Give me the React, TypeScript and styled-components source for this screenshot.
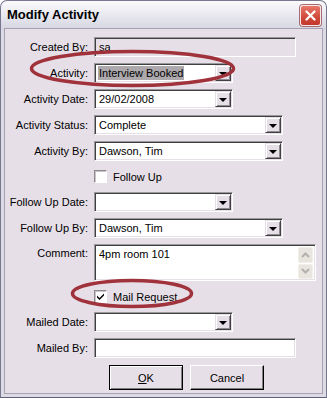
import React from "react";
import styled, { createGlobalStyle } from "styled-components";

const GlobalStyle = createGlobalStyle`
  html, body {
    margin: 0;
    padding: 0;
    background: #ffffff;
  }
  body {
    font-family: "Liberation Sans", Arial, sans-serif;
    font-size: 11px;
    color: #000000;
  }
`;

const FACE = "#e7dfe7";

const Frame = styled.div`
  width: 327px;
  height: 398px;
  box-sizing: border-box;
  border: 1px solid #77778f;
  border-bottom-color: #5f5f78;
  border-radius: 7px 7px 0 0;
  background: linear-gradient(#fbfbfd, #d6d6e2 28px, #dcdae4 30px);
  padding: 0 3px 3px;
  display: flex;
  flex-direction: column;
  overflow: hidden;
`;

const TitleBar = styled.div`
  height: 27px;
  display: flex;
  align-items: center;
  justify-content: space-between;
  padding: 0 2px 0 3px;
  flex-shrink: 0;
`;

const Title = styled.div`
  font-family: "Liberation Sans", Arial, sans-serif;
  font-weight: bold;
  font-size: 13px;
  color: #000000;
  padding-bottom: 1px;
`;

const CloseButton = styled.div`
  width: 19px;
  height: 19px;
  border: 1px solid #f4e8e8;
  border-radius: 3px;
  background: linear-gradient(#e8786a, #d04a3a 60%, #c2382c);
  display: flex;
  align-items: center;
  justify-content: center;
  margin-top: 1px;
  box-shadow: 0 0 0 1px #a76a70;
`;

const Client = styled.div`
  position: relative;
  flex: 1;
  background: ${FACE};
  border: 1px solid #a7a2b2;
  padding: 8px 0 0 0;
`;

const Form = styled.div`
  display: grid;
  grid-template-columns: 83px auto;
  column-gap: 6px;
  row-gap: 6px;
  align-items: center;
`;

const Label = styled.label<{ $top?: boolean }>`
  text-align: right;
  white-space: nowrap;
  line-height: 13px;
  align-self: ${(p) => (p.$top ? "start" : "center")};
  padding-top: ${(p) => (p.$top ? 3 : 0)}px;
`;

const Field = styled.div<{ $w: number; $h?: number; $disabled?: boolean }>`
  width: ${(p) => p.$w}px;
  height: ${(p) => p.$h ?? 20}px;
  box-sizing: border-box;
  border-style: solid;
  border-width: 1px;
  border-color: #9a979d #ffffff #ffffff #9a979d;
  box-shadow: inset 1px 1px 0 #404040, inset -1px -1px 0 ${FACE};
  background: ${(p) => (p.$disabled ? FACE : "#ffffff")};
  display: flex;
  padding: 1px;
`;

const Value = styled.div<{ $selected?: boolean }>`
  flex: 1;
  display: flex;
  align-items: center;
  padding-left: 2px;
  white-space: nowrap;
  span {
    padding: 1px;
    background: ${(p) => (p.$selected ? "#aca8ac" : "transparent")};
  }
`;

const DropButton = styled.div`
  width: 16px;
  height: 16px;
  box-sizing: border-box;
  background: ${FACE};
  border-style: solid;
  border-width: 1px;
  border-color: ${FACE} #404040 #404040 ${FACE};
  box-shadow: inset 1px 1px 0 #ffffff, inset -1px -1px 0 #8e8a90;
  display: flex;
  align-items: center;
  justify-content: center;
`;

const Arrow = styled.div`
  width: 0;
  height: 0;
  border-left: 4px solid transparent;
  border-right: 4px solid transparent;
  border-top: 4px solid #000000;
  margin-top: 1px;
`;

const CommentText = styled.div`
  flex: 1;
  padding: 2px 3px;
`;

const ScrollColumn = styled.div`
  width: 16px;
  display: flex;
  flex-direction: column;
  gap: 1px;
  padding: 1px 0 0 0;
`;

const ScrollButton = styled.div`
  width: 15px;
  height: 16px;
  box-sizing: border-box;
  border: 1px solid #f2eee8;
  background: #e8e4de;
  border-radius: 2px;
  display: flex;
  align-items: center;
  justify-content: center;
`;

const CheckRow = styled.div`
  height: 19px;
  display: flex;
  align-items: center;
  gap: 6px;
`;

const CheckBox = styled.div`
  width: 13px;
  height: 13px;
  box-sizing: border-box;
  border-style: solid;
  border-width: 1px;
  border-color: #8e8a8e #ffffff #ffffff #8e8a8e;
  background: #ffffff;
  box-shadow: inset 1px 1px 0 #c8c4c8;
  display: flex;
  align-items: center;
  justify-content: center;
`;

const ButtonRow = styled.div`
  display: flex;
  gap: 7px;
  padding-left: 15px;
  margin-top: 1px;
`;

const Button = styled.div<{ $default?: boolean }>`
  width: 74px;
  height: 25px;
  box-sizing: border-box;
  background: ${FACE};
  border: 1px solid ${(p) => (p.$default ? "#000000" : "#ffffff")};
  border-right-color: #000000;
  border-bottom-color: #000000;
  box-shadow: ${(p) =>
    p.$default
      ? "inset 1px 1px 0 #ffffff, inset -1px -1px 0 #808080"
      : "inset -1px -1px 0 #808080"};
  display: flex;
  align-items: center;
  justify-content: center;
  u {
    text-decoration: underline;
  }
`;

const Ring = styled.svg<{ $x: number; $y: number }>`
  position: absolute;
  left: ${(p) => p.$x}px;
  top: ${(p) => p.$y}px;
  pointer-events: none;
  overflow: visible;
`;

function Combo({ w, value, selected }: { w: number; value?: string; selected?: boolean }) {
  return (
    <Field $w={w}>
      <Value $selected={selected}>
        <span>{value}</span>
      </Value>
      <DropButton>
        <Arrow />
      </DropButton>
    </Field>
  );
}

function Chevron({ up }: { up?: boolean }) {
  return (
    <svg width="9" height="6" viewBox="0 0 9 6">
      <path
        d={up ? "M1 5 L4.5 1.5 L8 5" : "M1 1 L4.5 4.5 L8 1"}
        stroke="#b4b0ac"
        strokeWidth="2"
        fill="none"
      />
    </svg>
  );
}

function Check({ checked }: { checked?: boolean }) {
  return (
    <CheckBox>
      {checked && (
        <svg width="9" height="9" viewBox="0 0 9 9">
          <path d="M1 3.5 L3.5 6 L8 1.5 L8 3.5 L3.5 8 L1 5.5 Z" fill="#000000" />
        </svg>
      )}
    </CheckBox>
  );
}

export default function App() {
  return (
    <>
      <GlobalStyle />
      <Frame>
        <TitleBar>
          <Title>Modify Activity</Title>
          <CloseButton>
            <svg width="11" height="11" viewBox="0 0 11 11">
              <path d="M1.5 1.5 L9.5 9.5 M9.5 1.5 L1.5 9.5" stroke="#ffffff" strokeWidth="2.2" strokeLinecap="round" />
            </svg>
          </CloseButton>
        </TitleBar>
        <Client>
          <Form>
            <Label>Created By:</Label>
            <Field $w={202} $disabled>
              <Value>
                <span>sa</span>
              </Value>
            </Field>

            <Label>Activity:</Label>
            <Combo w={139} value="Interview Booked" selected />

            <Label>Activity Date:</Label>
            <Combo w={139} value="29/02/2008" />

            <Label>Activity Status:</Label>
            <Combo w={189} value="Complete" />

            <Label>Activity By:</Label>
            <Combo w={189} value="Dawson, Tim" />

            <span />
            <CheckRow>
              <Check />
              <span>Follow Up</span>
            </CheckRow>

            <Label>Follow Up Date:</Label>
            <Combo w={139} />

            <Label>Follow Up By:</Label>
            <Combo w={189} value="Dawson, Tim" />

            <Label $top>Comment:</Label>
            <Field $w={222} $h={37}>
              <CommentText>4pm room 101</CommentText>
              <ScrollColumn>
                <ScrollButton>
                  <Chevron up />
                </ScrollButton>
                <ScrollButton>
                  <Chevron />
                </ScrollButton>
              </ScrollColumn>
            </Field>

            <span />
            <CheckRow>
              <Check checked />
              <span>Mail Request</span>
            </CheckRow>

            <Label>Mailed Date:</Label>
            <Combo w={139} />

            <Label>Mailed By:</Label>
            <Field $w={202} />

            <span />
            <ButtonRow>
              <Button $default>
                <span>
                  <u>O</u>K
                </span>
              </Button>
              <Button>Cancel</Button>
            </ButtonRow>
          </Form>

          <Ring $x={25} $y={21} width="205" height="37" viewBox="0 0 205 37">
            <ellipse cx="102.5" cy="18.5" rx="101" ry="17" fill="none" stroke="#a0323c" strokeWidth="3.5" />
          </Ring>
          <Ring $x={66} $y={250} width="122" height="29" viewBox="0 0 122 29">
            <ellipse cx="61" cy="14.5" rx="59.5" ry="13" fill="none" stroke="#a0323c" strokeWidth="3.5" />
          </Ring>
        </Client>
      </Frame>
    </>
  );
}
